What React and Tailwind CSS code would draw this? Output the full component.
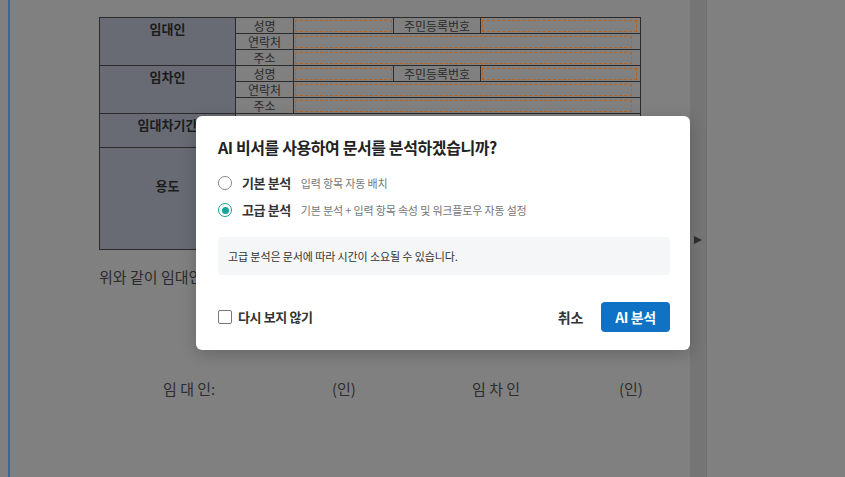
import { useState } from 'react';

const font = "font-['Noto_Sans_CJK_KR','Noto_Sans',sans-serif]";

function Dashed({ className = '' }) {
  return <div className={`border border-dashed border-[#b8621c] ${className}`} />;
}

function PartyRows({ title }) {
  return (
    <>
      <tr className="h-[16px]">
        <td rowSpan={3} className="border border-[#2b2b2b] bg-[#686b73] align-top pt-[2px] text-center text-[13px] font-bold leading-[18px] text-[#1c1c1c]">
          {title}
        </td>
        <td className="border border-[#2b2b2b] text-center text-[12px] leading-[14px] text-[#2a2a2a]">성명</td>
        <td className="border border-[#2b2b2b] p-px">
          <Dashed className="h-[12px]" />
        </td>
        <td className="border border-[#2b2b2b] text-center text-[12px] leading-[14px] text-[#2a2a2a]">주민등록번호</td>
        <td className="border border-[#2b2b2b] p-px pr-[3px]">
          <Dashed className="h-[12px]" />
        </td>
      </tr>
      <tr className="h-[16px]">
        <td className="border border-[#2b2b2b] text-center text-[12px] leading-[14px] text-[#2a2a2a]">연락처</td>
        <td colSpan={3} className="border border-[#2b2b2b] p-px pr-[8px]">
          <Dashed className="h-[12px]" />
        </td>
      </tr>
      <tr className="h-[16px]">
        <td className="border border-[#2b2b2b] text-center text-[12px] leading-[14px] text-[#2a2a2a]">주소</td>
        <td colSpan={3} className="border border-[#2b2b2b] p-px pr-[8px]">
          <Dashed className="h-[12px]" />
        </td>
      </tr>
    </>
  );
}

function Document() {
  return (
    <main className="w-[680px] pl-[89px] pt-[17px] text-[#2b2b2b]">
      <table className="w-[541px] table-fixed border-collapse">
        <colgroup>
          <col className="w-[136px]" />
          <col className="w-[58px]" />
          <col className="w-[100px]" />
          <col className="w-[87px]" />
          <col className="w-[160px]" />
        </colgroup>
        <tbody>
          <PartyRows title="임대인" />
          <PartyRows title="임차인" />
          <tr className="h-[34px]">
            <td className="border border-[#2b2b2b] bg-[#686b73] align-top pt-[2px] text-center text-[13px] font-bold leading-[18px] text-[#1c1c1c]">
              임대차기간
            </td>
            <td colSpan={4} className="border border-[#2b2b2b] p-px pl-[58px] pr-[8px]">
              <Dashed className="h-[30px]" />
            </td>
          </tr>
          <tr className="h-[102px]">
            <td className="border border-[#2b2b2b] bg-[#686b73] pb-[26px] text-center text-[13px] font-bold leading-[18px] text-[#1c1c1c]">
              용도
            </td>
            <td colSpan={4} className="border border-[#2b2b2b] p-px pl-[58px] pr-[8px]">
              <Dashed className="h-[98px]" />
            </td>
          </tr>
        </tbody>
      </table>

      <p className="mt-[17px] whitespace-nowrap text-[15px] leading-[20px] text-[#2b2b2b]">
        위와 같이 임대인과 임차인은 상호 합의하에 계약을 체결하고 이를 증명합니다.
      </p>

      <div className="mt-[92px] grid grid-cols-[169px_140px_147px_auto] pl-[64px] text-[15px] leading-[20px] text-[#2d2d2d]">
        <span>임 대 인:</span>
        <span>(인)</span>
        <span>임 차 인</span>
        <span>(인)</span>
      </div>
    </main>
  );
}

function Radio({ checked, label, desc, onClick }) {
  return (
    <button type="button" onClick={onClick} className="flex h-[18px] items-center gap-[10px] text-left">
      {checked ? (
        <span className="grid size-[14px] place-items-center rounded-full border-[1.5px] border-[#1aa39a]">
          <span className="size-[7px] rounded-full bg-[#1aa39a]" />
        </span>
      ) : (
        <span className="size-[14px] rounded-full border border-[#8a8a8a]" />
      )}
      <span className="text-[13px] font-bold tracking-[-0.03em] text-[#333]">{label}</span>
      <span className="text-[11px] tracking-[-0.015em] text-[#777]">{desc}</span>
    </button>
  );
}

function AnalyzeDialog() {
  const [mode, setMode] = useState('advanced');
  const [skip, setSkip] = useState(false);

  return (
    <div className="absolute left-[196px] top-[116px] h-[234px] w-[494px] rounded-[6px] bg-white pl-[22px] pr-[20px] pt-[19px] shadow-[0_4px_16px_rgba(0,0,0,0.2)]">
      <h2 className="text-[16px] font-bold leading-[24px] tracking-[-0.025em] text-[#222]">
        AI 비서를 사용하여 문서를 분석하겠습니까?
      </h2>

      <div className="mt-[15px] flex flex-col gap-[9px]">
        <Radio
          checked={mode === 'basic'}
          label="기본 분석"
          desc="입력 항목 자동 배치"
          onClick={() => setMode('basic')}
        />
        <Radio
          checked={mode === 'advanced'}
          label="고급 분석"
          desc="기본 분석 + 입력 항목 속성 및 워크플로우 자동 설정"
          onClick={() => setMode('advanced')}
        />
      </div>

      <div className="mt-[18px] flex h-[38px] items-center rounded-[4px] bg-[#f5f6f8] px-[10px] text-[11px] tracking-[-0.01em] text-[#333]">
        고급 분석은 문서에 따라 시간이 소요될 수 있습니다.
      </div>

      <div className="mt-[27px] flex items-center">
        <button type="button" onClick={() => setSkip((v) => !v)} className="flex items-center gap-[6px]">
          <span className={`size-[14px] rounded-[2px] border ${skip ? 'border-[#0f72c4] bg-[#0f72c4]' : 'border-[#777] bg-white'}`} />
          <span className="text-[13px] font-bold tracking-[-0.03em] text-[#333]">다시 보지 않기</span>
        </button>
        <button type="button" className="ml-auto text-[14px] font-bold tracking-[-0.02em] text-[#333]">
          취소
        </button>
        <button
          type="button"
          className="ml-[18px] h-[30px] w-[69px] rounded-[4px] bg-[#0f72c4] text-[14px] font-bold tracking-[-0.03em] text-white"
        >
          AI 분석
        </button>
      </div>
    </div>
  );
}

export default function App() {
  return (
    <div className={`relative h-[477px] w-[845px] overflow-hidden bg-[#808080] ${font}`}>
      <div className="flex h-full">
        <div className="w-[8px]" />
        <div className="w-[2px] bg-[#3b6793]" />
        <Document />
        <div className="flex w-[17px] items-center border-r border-[#707070] bg-[#757575] pt-[3px]">
          <span className="ml-[4px] h-0 w-0 border-y-[4.5px] border-l-[8px] border-y-transparent border-l-[#2e2e2e]" />
        </div>
        <div className="flex-1" />
      </div>
      <AnalyzeDialog />
    </div>
  );
}
